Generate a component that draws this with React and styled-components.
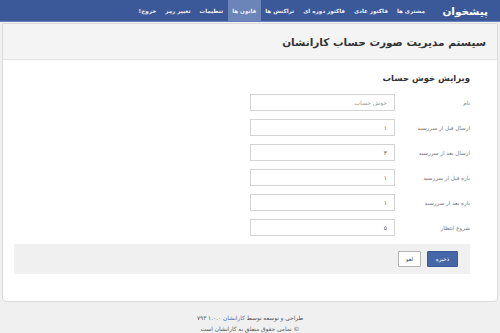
import React from 'react';
import styled, {createGlobalStyle} from 'styled-components';

const GlobalStyle = createGlobalStyle`
    html, body {
        margin: 0;
        padding: 0;
        background: #f0f0f0;
    }
    body {
        font-family: 'DejaVu Sans', 'Noto Sans', sans-serif;
        direction: rtl;
        width: 500px;
        height: 333px;
        overflow: hidden;
    }
`

const NavBar = styled.nav`
    height: 21px;
    background-color: #3b5998;
    border-bottom: 1px solid #6882b8;
    display: flex;
    align-items: stretch;
    padding-right: 12px;
`

const Brand = styled.a`
    color: #fff;
    font-size: 10.5px;
    font-weight: bold;
    display: flex;
    align-items: center;
    margin-left: 13px;
    text-decoration: none;
    letter-spacing: -0.3px;
`

const NavItem = styled.a`
    color: #eef1f8;
    font-size: 5.6px;
    font-weight: bold;
    display: flex;
    align-items: center;
    padding: 0 4.5px;
    text-decoration: none;
    white-space: nowrap;
    background: ${props => props.active ? '#6c85b9' : 'transparent'};
`

const Panel = styled.section`
    margin: 1px 2px 0;
    background: #fff;
    border: 1px solid #dcdcdc;
    border-radius: 0 0 4px 4px;
    overflow: hidden;
`

const PanelHeader = styled.header`
    height: 35px;
    background: #f4f4f4;
    border-bottom: 1px solid #e2e2e2;
    display: flex;
    align-items: center;
    padding-right: 11px;

    h1 {
        margin: 0;
        font-size: 10.5px;
        font-weight: bold;
        color: #333;
        letter-spacing: -0.3px;
    }
`

const PanelBody = styled.div`
    padding: 12px 27px 27px 11px;
`

const FormTitle = styled.h2`
    margin: 0 0 10px;
    font-size: 8.5px;
    font-weight: bold;
    color: #333;
    letter-spacing: -0.2px;
    line-height: 12px;
`

const FormRow = styled.div`
    display: grid;
    grid-template-columns: 75px 145px;
    align-items: center;
    height: 17px;
    margin-bottom: 8px;
`

const Label = styled.label`
    font-size: 5.6px;
    color: #777;
    white-space: nowrap;
`

const Input = styled.input`
    box-sizing: border-box;
    height: 17px;
    width: 145px;
    border: 1px solid #d4d4d4;
    background: #fff;
    padding: 0 7px;
    font-family: inherit;
    font-size: 6px;
    color: ${props => props.muted ? '#999' : '#555'};
    direction: rtl;
    outline: none;
`

const Actions = styled.div`
    height: 30px;
    background: #f0f0f0;
    display: flex;
    align-items: center;
    gap: 6px;
    padding-right: 12px;
`

const Button = styled.button`
    box-sizing: border-box;
    height: 16px;
    font-family: inherit;
    font-size: 5.5px;
    padding: 0;
    width: ${props => props.primary ? '31px' : '23px'};
    color: ${props => props.primary ? '#fff' : '#444'};
    background: ${props => props.primary ? '#4766a8' : '#fff'};
    border: 1px solid ${props => props.primary ? '#3b5998' : '#b4b4b4'};
    border-radius: 1px;
`

const Footer = styled.footer`
    text-align: center;
    font-size: 5.8px;
    color: #555;
    padding-top: 11px;
    line-height: 11px;

    a {
        color: #4a6bb0;
        text-decoration: none;
    }
`

const fields = [
    {label: 'نام', value: 'خوش حساب', muted: true},
    {label: 'ارسال قبل از سررسید', value: '۱'},
    {label: 'ارسال بعد از سررسید', value: '۳'},
    {label: 'بازه قبل از سررسید', value: '۱'},
    {label: 'بازه بعد از سررسید', value: '۱'},
    {label: 'شروع انتظار', value: '۵'},
]

const links = ['مشتری ها', 'فاکتور عادی', 'فاکتور دوره ای', 'تراکنش ها', 'قانون ها', 'تنظیمات', 'تغییر رمز', 'خروج!']

const App = () => {
    return (
        <>
            <GlobalStyle />
            <NavBar>
                <Brand href="#">پیشخوان</Brand>
                {links.map(l => (
                    <NavItem key={l} href="#" active={l === 'قانون ها' ? 1 : 0}>{l}</NavItem>
                ))}
            </NavBar>
            <Panel>
                <PanelHeader>
                    <h1>سیستم مدیریت صورت حساب کارانشان</h1>
                </PanelHeader>
                <PanelBody>
                    <FormTitle>ویرایش خوش حساب</FormTitle>
                    {fields.map(f => (
                        <FormRow key={f.label}>
                            <Label>{f.label}</Label>
                            <Input defaultValue={f.value} muted={f.muted ? 1 : 0} />
                        </FormRow>
                    ))}
                    <Actions>
                        <Button primary={1}>ذخیره</Button>
                        <Button>لغو</Button>
                    </Actions>
                </PanelBody>
            </Panel>
            <Footer>
                <div>طراحی و توسعه توسط <a href="#">کارانشان</a> ۱.۰.۰ ۷۹۳</div>
                <div>© تمامی حقوق متعلق به کارانشان است</div>
            </Footer>
        </>
    )
}

export default App
